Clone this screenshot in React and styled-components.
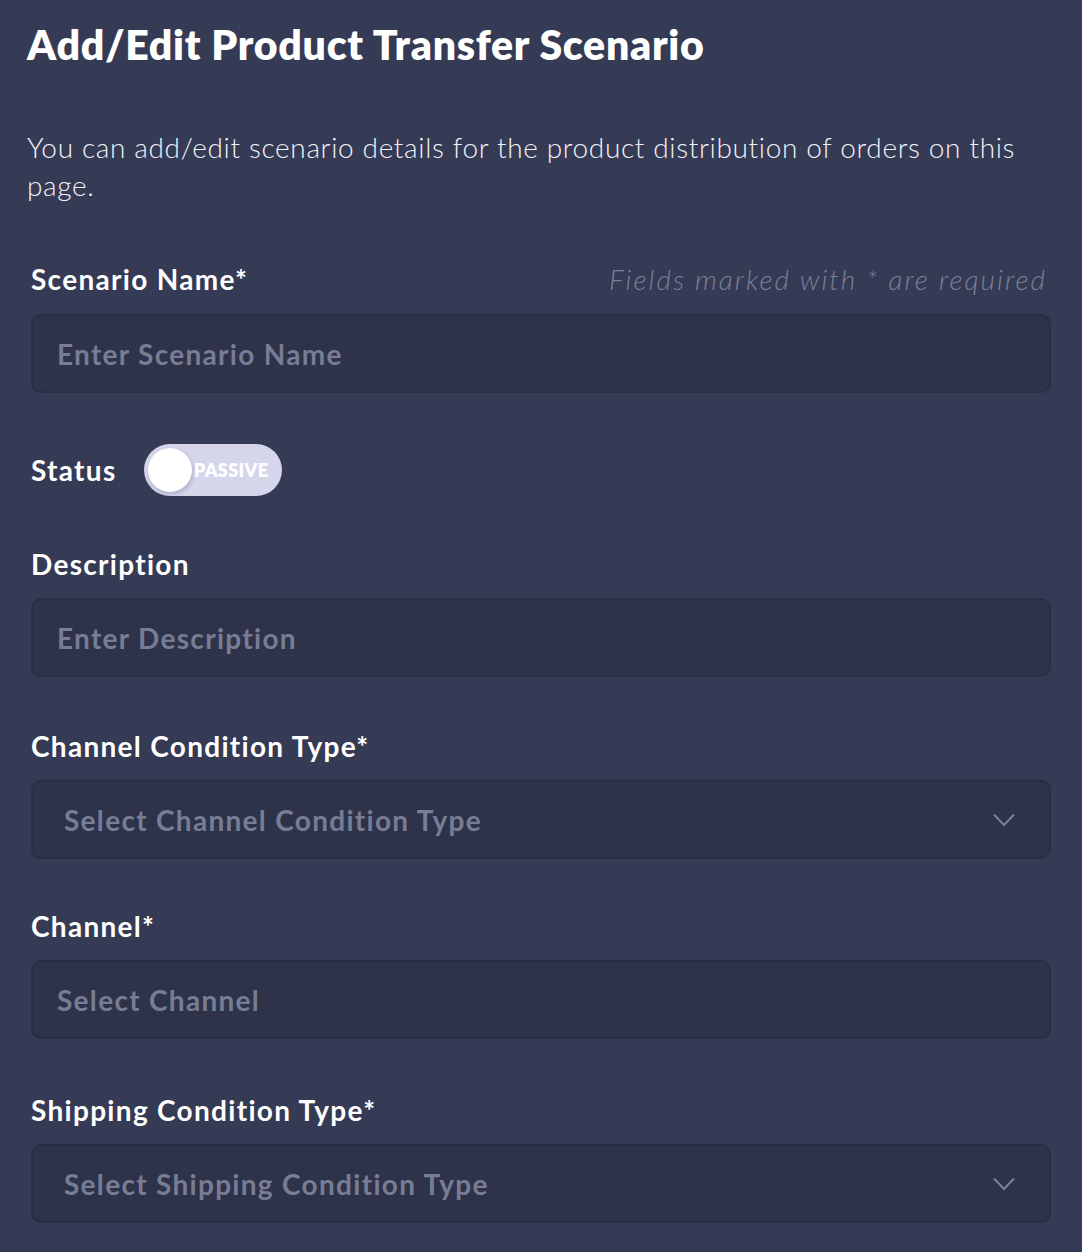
import styled, { createGlobalStyle } from "styled-components";

const GlobalStyle = createGlobalStyle`
  html, body {
    margin: 0;
    padding: 0;
    background: #353a55;
  }
  body {
    font-family: Lato, "Noto Sans", "DejaVu Sans", sans-serif;
    color: #ffffff;
  }
`;

const Page = styled.div`
  padding: 20px 31px 30px 31px;
  min-height: 1252px;
  box-sizing: border-box;
  background: #353a55;
`;

const Title = styled.h1`
  margin: 0 0 0 -4px;
  font-size: 41px;
  line-height: 50px;
  font-weight: 800;
  letter-spacing: 0.7px;
`;

const Intro = styled.p`
  margin: 58px 0 0 -4px;
  font-size: 28px;
  line-height: 38px;
  font-weight: 300;
  letter-spacing: 0.65px;
  color: #f2f3f8;
`;

const LabelRow = styled.div`
  display: flex;
  justify-content: space-between;
  align-items: baseline;
  margin-top: ${({ $top }) => $top}px;
  margin-bottom: 18px;
`;

const Label = styled.label`
  font-size: 28px;
  line-height: 32px;
  font-weight: 700;
  letter-spacing: 1.3px;
`;

const Hint = styled.span`
  font-size: 28px;
  font-style: italic;
  font-weight: 300;
  color: #7b8099;
  letter-spacing: 2px;
  margin-right: 4px;
`;

const Field = styled.div`
  display: flex;
  align-items: center;
  justify-content: space-between;
  height: 79px;
  box-sizing: border-box;
  padding: 0 34px 0 ${({ $select }) => ($select ? 31 : 24)}px;
  background: #2e3349;
  border: 2px solid #2a2e43;
  border-radius: 10px;
`;

const Placeholder = styled.span`
  font-size: 28px;
  font-weight: 700;
  color: #777d94;
  letter-spacing: 1.3px;
`;

const StatusRow = styled.div`
  display: flex;
  align-items: center;
  gap: 27px;
  margin-top: 51px;
`;

const Toggle = styled.div`
  position: relative;
  display: flex;
  align-items: center;
  justify-content: flex-end;
  width: 138px;
  height: 52px;
  box-sizing: border-box;
  padding-right: 13px;
  border-radius: 26px;
  background: #d5d6ec;
`;

const Knob = styled.span`
  position: absolute;
  left: 4px;
  top: 4px;
  width: 44px;
  height: 44px;
  border-radius: 50%;
  background: #ffffff;
  box-shadow: 1px 2px 4px rgba(40, 44, 70, 0.25);
`;

const ToggleText = styled.span`
  font-size: 18px;
  font-weight: 800;
  color: #ffffff;
  letter-spacing: 0.4px;
`;

const Chevron = () => (
  <svg width="22" height="14" viewBox="0 0 22 14" fill="none">
    <path d="M1 1.5 L11 12 L21 1.5" stroke="#7a8099" strokeWidth="2" />
  </svg>
);

function FormField({ label, placeholder, select, top, hint }) {
  return (
    <>
      <LabelRow $top={top}>
        <Label>{label}</Label>
        {hint && <Hint>{hint}</Hint>}
      </LabelRow>
      <Field $select={select}>
        <Placeholder>{placeholder}</Placeholder>
        {select && <Chevron />}
      </Field>
    </>
  );
}

export default function App() {
  return (
    <>
      <GlobalStyle />
      <Page>
        <Title>Add/Edit Product Transfer Scenario</Title>
        <Intro>
          You can add/edit scenario details for the product distribution of
          orders on this page.
        </Intro>

        <FormField
          top={58}
          label="Scenario Name*"
          placeholder="Enter Scenario Name"
          hint="Fields marked with * are required"
        />

        <StatusRow>
          <Label>Status</Label>
          <Toggle>
            <Knob />
            <ToggleText>PASSIVE</ToggleText>
          </Toggle>
        </StatusRow>

        <FormField top={52} label="Description" placeholder="Enter Description" />
        <FormField
          top={53}
          label="Channel Condition Type*"
          placeholder="Select Channel Condition Type"
          select
        />
        <FormField top={51} label="Channel*" placeholder="Select Channel" />
        <FormField
          top={55}
          label="Shipping Condition Type*"
          placeholder="Select Shipping Condition Type"
          select
        />
      </Page>
    </>
  );
}
